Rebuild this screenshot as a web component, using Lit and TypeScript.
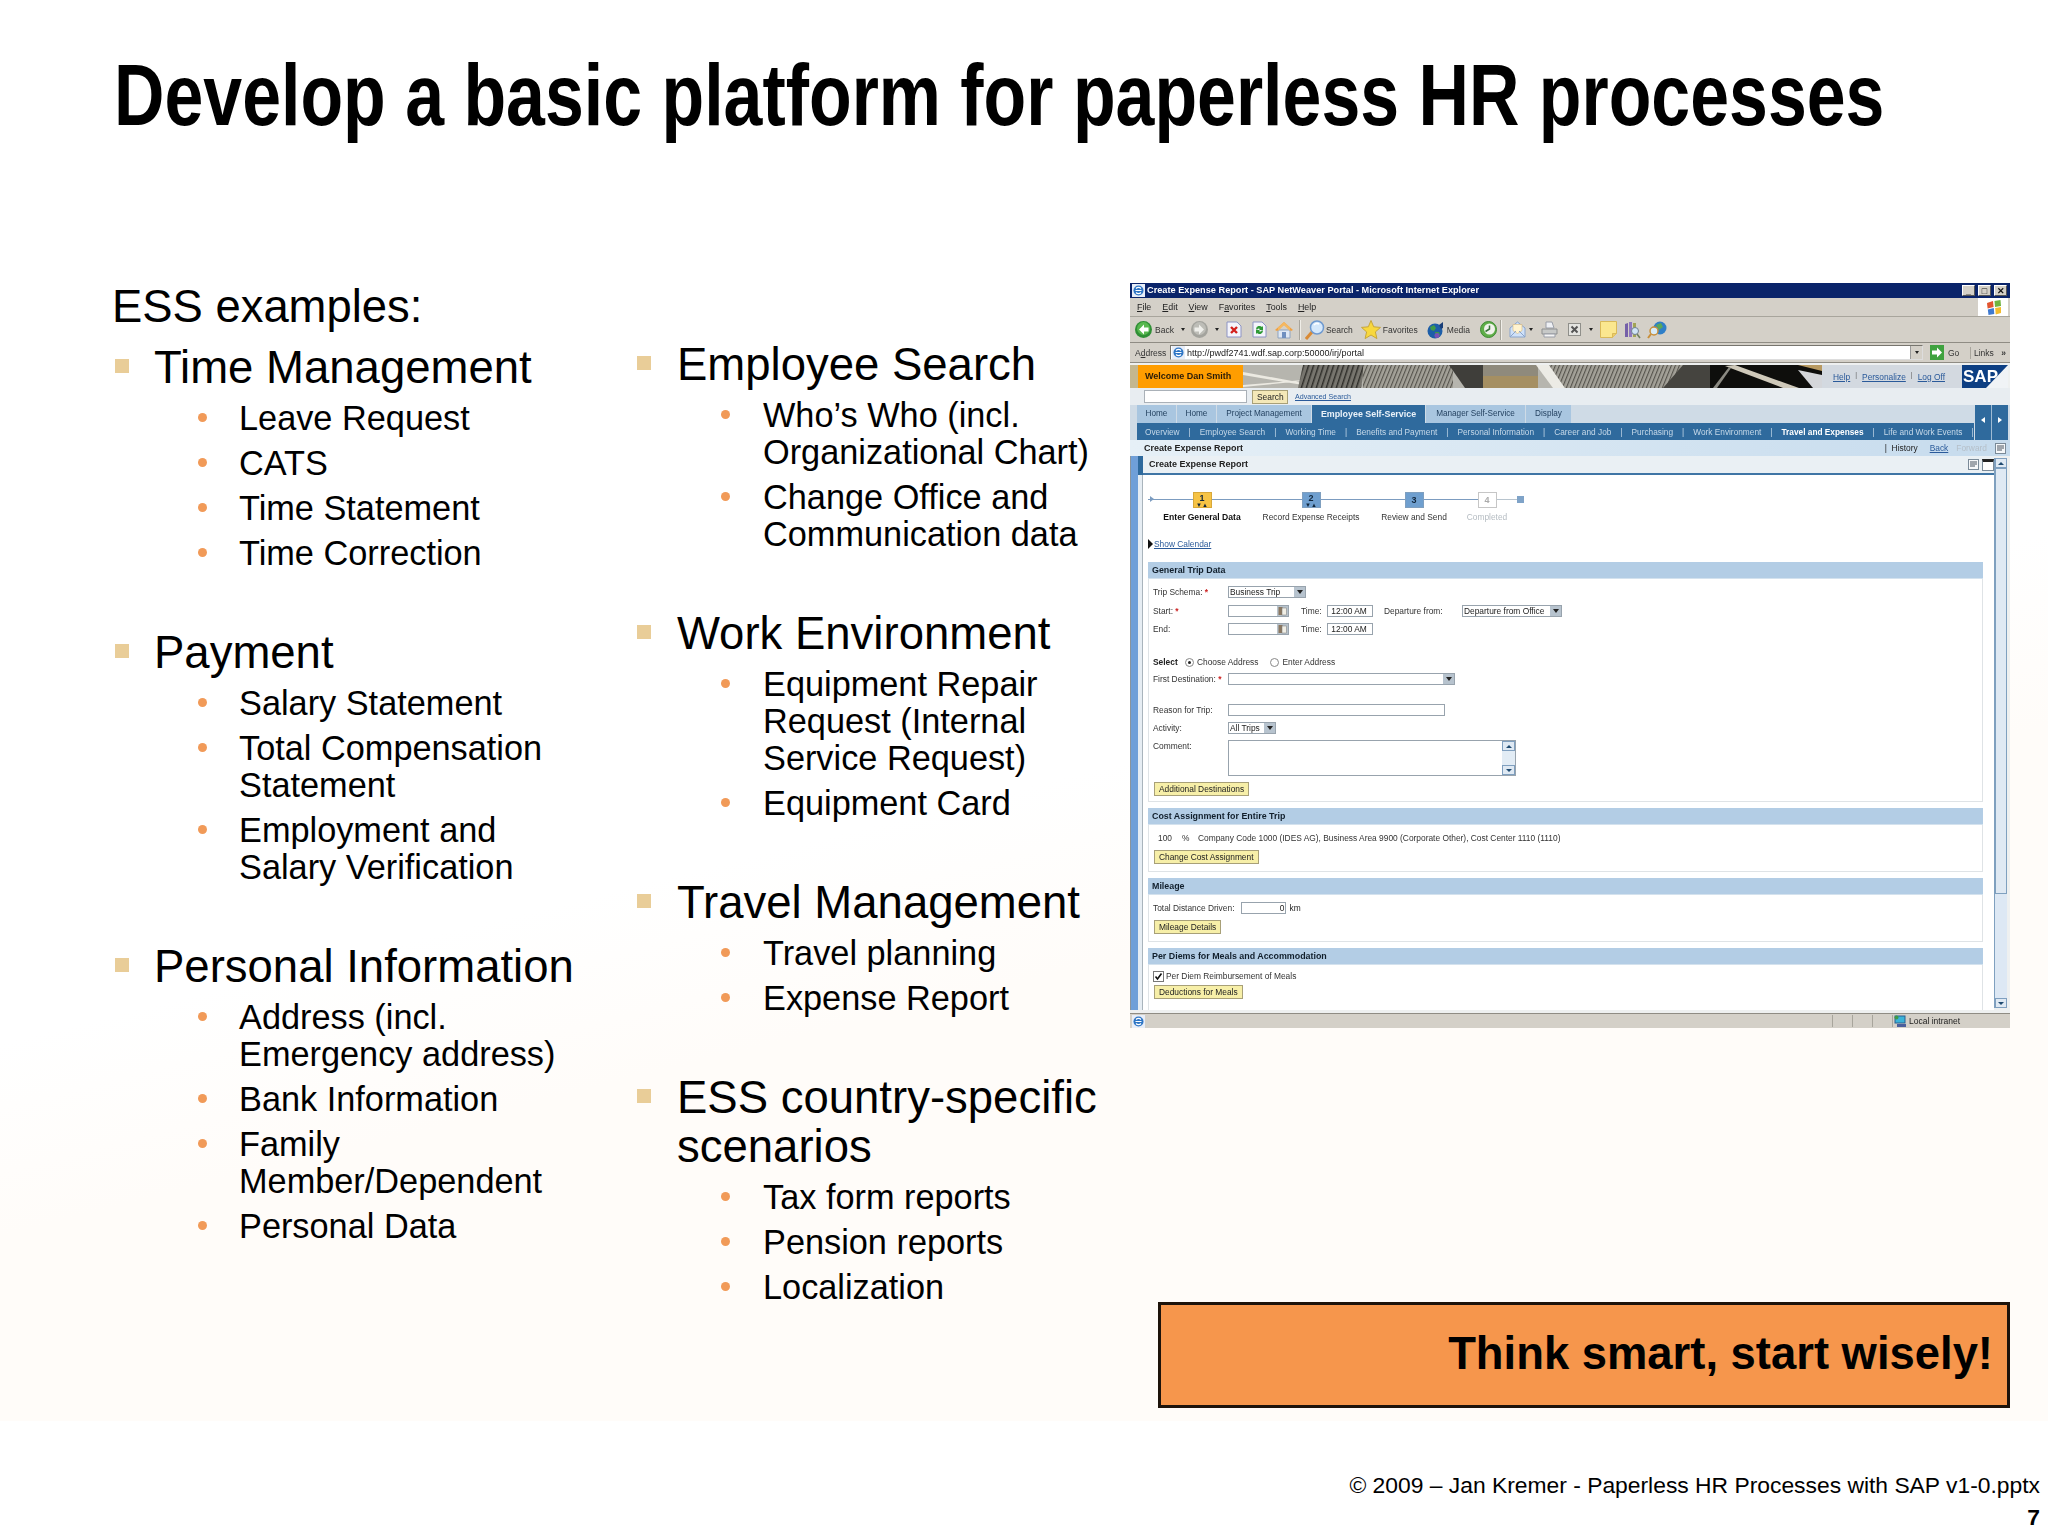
import { LitElement, html, css, svg } from 'lit';
import { customElement } from 'lit/decorators.js';

type Topic = { title: string; items: string[] };

const column1: Topic[] = [
  { title: 'Time Management', items: ['Leave Request', 'CATS', 'Time Statement', 'Time Correction'] },
  { title: 'Payment', items: ['Salary Statement', 'Total Compensation\nStatement', 'Employment and\nSalary Verification'] },
  { title: 'Personal Information', items: ['Address (incl.\nEmergency address)', 'Bank Information', 'Family\nMember/Dependent', 'Personal Data'] },
];

const column2: Topic[] = [
  { title: 'Employee Search', items: ['Who\u2019s Who (incl.\nOrganizational Chart)', 'Change Office and\nCommunication data'] },
  { title: 'Work Environment', items: ['Equipment Repair\nRequest (Internal\nService Request)', 'Equipment Card'] },
  { title: 'Travel Management', items: ['Travel planning', 'Expense Report'] },
  { title: 'ESS country-specific\nscenarios', items: ['Tax form reports', 'Pension reports', 'Localization'] },
];

const icon = (w: number, h: number, body: unknown) =>
  html`<svg width=${w} height=${h} viewBox="0 0 ${w} ${h}">${body}</svg>`;

const icons: Record<string, unknown> = {
  back: icon(17, 17, svg`<circle cx="8.5" cy="8.5" r="8.5" fill="#2f8f35"/><circle cx="8.5" cy="7.5" r="6.5" fill="#58b84f"/><path d="M9 3.5 4 8.5l5 5v-3h4.500v-4H9z" fill="#fff"/>`),
  forward: icon(17, 17, svg`<circle cx="8.500" cy="8.500" r="8.500" fill="#a3a39d"/><circle cx="8.500" cy="7.500" r="6.500" fill="#bdbdb7"/><path d="M8 3.500l5 5-5 5v-3H3.500v-4H8z" fill="#efefeb"/>`),
  stop: icon(16, 17, svg`<path d="M1 1h10l4 4v11H1z" fill="#f4f4fb" stroke="#8d94c4"/><path d="M5 6l6 6M11 6l-6 6" stroke="#d3201c" stroke-width="2.400"/>`),
  refresh: icon(15, 17, svg`<path d="M1 1h9l4 4v11H1z" fill="#f4f4fb" stroke="#8d94c4"/><path d="M4 8a3.500 3.500 0 0 1 6-2l1-1v4H7l1-1a2 2 0 0 0-3 1zM11 10a3.500 3.500 0 0 1-6 2l-1 1V9h4l-1 1a2 2 0 0 0 3-1z" fill="#2f9a35"/>`),
  home: icon(18, 18, svg`<path d="M3 9h12v8H3z" fill="#dfe8f4" stroke="#8ea3c0"/><path d="M7 11h4v6H7z" fill="#6f8fbf"/><path d="M0 9 9 1l9 8-2 1-7-6-7 6z" fill="#f0a040"/><path d="M9 1 3 6.500V10l6-6 6 6V6.500z" fill="#f5b860"/>`),
  search: icon(20, 20, svg`<path d="M7 12l-6 7" stroke="#d98a35" stroke-width="3"/><circle cx="12" cy="7.500" r="6.500" fill="#d5e8fb" stroke="#6f9ad0" stroke-width="1.500"/><path d="M9 5a4 4 0 0 1 5-1" stroke="#fff" stroke-width="1.500" fill="none"/>`),
  star: icon(20, 20, svg`<path d="M10 .5l2.700 6.300 6.800.6-5.100 4.500 1.500 6.700L10 15l-5.900 3.600 1.500-6.700L.5 7.400l6.800-.6z" fill="#f8d83f" stroke="#c7a63a"/>`),
  media: icon(18, 18, svg`<circle cx="8" cy="10" r="7.500" fill="#1d5ea8"/><path d="M3 6l4-2 2 3-2 3-3-1zM8 11l4 0 1 3-4 2z" fill="#3f9a48"/><circle cx="10" cy="14.500" r="2.500" fill="#7a52b5"/><path d="M12 4l4-3v6l-2 1z" fill="#1a3f78"/>`),
  history: icon(17, 17, svg`<circle cx="8.500" cy="8.500" r="8" fill="#5fae48" stroke="#3f8a35"/><circle cx="9.500" cy="8" r="5.500" fill="#f0f2ec"/><path d="M9.500 4.500V8l-4 2.500" stroke="#39743a" stroke-width="1.500" fill="none"/>`),
  mail: icon(17, 17, svg`<path d="M1 7 8.500 1 16 7v9H1z" fill="#cfe1f8" stroke="#8aa5cc"/><path d="M4 3.500h9v6l-4.500 3-4.500-3z" fill="#fff3d0" stroke="#d9b97a" stroke-width=".6"/><path d="M1 16l6-6M16 16l-6-6" stroke="#8aa5cc"/>`),
  print: icon(17, 17, svg`<path d="M5 1h6l2 6H5z" fill="#eef0f4" stroke="#9a9ea8"/><path d="M1 8h15v5H1z" fill="#c7c9c8" stroke="#8d8f90"/><path d="M3 13h11v3H3z" fill="#f4f4f4" stroke="#9a9ea8"/>`),
  edit: icon(13, 13, svg`<rect x=".5" y=".5" width="12" height="12" fill="#e4e4e0" stroke="#8f8f8a"/><path d="M3.500 3.500l6 6M9.500 3.500l-6 6" stroke="#555" stroke-width="2"/>`),
  note: icon(17, 17, svg`<path d="M.5.5h16v12l-4 4H.500z" fill="#fbe78f" stroke="#d9b95a"/><path d="M12.500 16.500v-4h4" fill="#eccd6a" stroke="#d9b95a"/>`),
  books: icon(17, 18, svg`<path d="M1 3l3-1v14H1z" fill="#7560a8"/><path d="M5 1h3v15H5z" fill="#8f78bf"/><path d="M9 2h3v14H9z" fill="#a2a455"/><circle cx="11" cy="10" r="3.500" fill="#cfe4f6" stroke="#6f7f90"/><path d="M13 13l3 4" stroke="#6f7f60" stroke-width="1.500"/>`),
  research: icon(23, 18, svg`<circle cx="14" cy="7" r="6.500" fill="#2f7fc8"/><path d="M10 4l5-2 2 4-4 3z" fill="#5aa858"/><circle cx="8" cy="10" r="4" fill="#d8ebf8" stroke="#c98f3a" stroke-width="1.500"/><path d="M5 13l-3 4" stroke="#c98f3a" stroke-width="2"/>`),
  ie: icon(13, 13, svg`<rect width="13" height="13" fill="#e8eef8"/><circle cx="6.500" cy="6.500" r="5" fill="#2d75c5"/><path d="M3.500 6.500h6M4 4.500a3.500 3.500 0 0 1 5 0M4 8.500a3.500 3.500 0 0 0 5 0" stroke="#fff" stroke-width="1.200" fill="none"/>`),
  flag: icon(15, 15, svg`<path d="M1 3l6-2 .6 6-6 1.500z" fill="#e2552f"/><path d="M8.500 1l6-1 .500 6-6 1z" fill="#6fb43f"/><path d="M1.800 9.500l6-1.500.500 6-5.800 1z" fill="#3f79d0"/><path d="M9.200 8l6-1 -.200 6-5.300 1.500z" fill="#f3bb2d"/>`),
  go: icon(14, 15, svg`<rect width="14" height="15" fill="#3fa23f"/><path d="M7 2.500l5 5-5 5V9.500H2v-4h5z" fill="#fff"/>`),
  cal: icon(11, 10, svg`<rect width="11" height="10" fill="#b8c3cc"/><rect x="1.500" y="1" width="4" height="8" fill="#8a7760"/><rect x="5" y="2" width="4.500" height="7" fill="#f1efe6" stroke="#777" stroke-width=".5"/>`),
  net: icon(13, 12, svg`<rect x="1" y="1" width="10" height="7" fill="#3bb3d8" stroke="#2a5f90"/><rect x="3" y="9" width="9" height="3" fill="#4b5f9c"/><circle cx="2.500" cy="2.500" r="2" fill="#3f9a48"/>`),
  doc: icon(11, 11, svg`<rect x=".5" y=".5" width="10" height="10" fill="#f5f7f9" stroke="#7a8a98"/><path d="M2 3h7M2 5h7M2 7h5" stroke="#4a5560"/>`),
  tick: icon(9, 9, svg`<rect width="9" height="9" fill="#fff"/><path d="M1.500 4.500 3.500 7 7.500 1.500" stroke="#111" stroke-width="1.600" fill="none"/>`),
};

const toolbarItems: { gap: number; icon?: string; text?: string; drop?: boolean; sep?: boolean }[] = [
  { gap: 5, icon: 'back' },
  { gap: 3, text: 'Back' },
  { gap: 7, drop: true },
  { gap: 6, icon: 'forward' },
  { gap: 7, drop: true },
  { gap: 7, icon: 'stop' },
  { gap: 10, icon: 'refresh' },
  { gap: 8, icon: 'home' },
  { gap: 6, sep: true },
  { gap: 4, icon: 'search' },
  { gap: 1, text: 'Search' },
  { gap: 8, icon: 'star' },
  { gap: 2, text: 'Favorites' },
  { gap: 9, icon: 'media' },
  { gap: 2, text: 'Media' },
  { gap: 10, icon: 'history' },
  { gap: 3, sep: true },
  { gap: 7, icon: 'mail' },
  { gap: 3, drop: true },
  { gap: 8, icon: 'print' },
  { gap: 10, icon: 'edit' },
  { gap: 8, drop: true },
  { gap: 7, icon: 'note' },
  { gap: 7, icon: 'books' },
  { gap: 5, icon: 'research' },
];

const tabs = [
  { label: 'Home', width: 39 },
  { label: 'Home', width: 39 },
  { label: 'Project Management', width: 94 },
  { label: 'Employee Self-Service', width: 113, active: true },
  { label: 'Manager Self-Service', width: 99 },
  { label: 'Display', width: 45 },
];

const subnav = ['Overview', 'Employee Search', 'Working Time', 'Benefits and Payment', 'Personal Information', 'Career and Job', 'Purchasing', 'Work Environment', 'Travel and Expenses', 'Life and Work Events'];

const steps = [
  { n: '1', label: 'Enter General Data', width: 108, cls: 'current', marks: true },
  { n: '2', label: 'Record Expense Receipts', width: 110, cls: 'done', marks: true },
  { n: '3', label: 'Review and Send', width: 96, cls: 'done', marks: false },
  { n: '4', label: 'Completed', width: 50, cls: 'todo', marks: false },
];

@customElement('sap-window')
export class SapWindow extends LitElement {
  static styles = css`
    :host {
      display: block;
      width: 880px;
      height: 745px;
      font: 8.4px/12px 'Liberation Sans', Arial, sans-serif;
      color: #222;
      background: #eef0f0;
      filter: blur(0.35px);
      overflow: hidden;
    }
    svg { display: block; flex: none; }
    .titlebar {
      height: 15px;
      background: #0a246a;
      color: #fff;
      font-weight: 700;
      font-size: 9.2px;
      line-height: 15px;
      display: flex;
      align-items: center;
      gap: 2px;
      padding: 0 3px 0 2px;
    }
    .titlebar .grow { flex: 1; }
    .ctl {
      width: 11px;
      height: 9px;
      margin-left: 1px;
      background: #d4d0c8;
      border: 1px solid #fff;
      border-right-color: #555;
      border-bottom-color: #555;
      color: #111;
      font-size: 9px;
      line-height: 10px;
      text-align: center;
      box-sizing: content-box;
    }
    .menubar {
      height: 18px;
      background: #d4d0c8;
      border-bottom: 1px solid #a8a59c;
      display: flex;
      align-items: center;
      gap: 11px;
      padding-left: 7px;
      font-size: 8.9px;
    }
    .menubar u { text-decoration: underline; }
    .throbber {
      margin-left: auto;
      width: 30px;
      height: 18px;
      background: #fff;
      display: flex;
      align-items: center;
      justify-content: center;
      margin-right: 2px;
    }
    .toolbar {
      height: 25px;
      background: #d4d0c8;
      border-bottom: 1px solid #8f8c84;
      display: flex;
      align-items: center;
      font-size: 8.5px;
      color: #333;
    }
    .drop-mark {
      width: 0;
      height: 0;
      border: 2px solid transparent;
      border-top: 3px solid #222;
      border-bottom: 0;
    }
    .sep { width: 1px; height: 20px; background: #a8a59c; border-right: 1px solid #f0eee8; }
    .addressbar {
      height: 20px;
      background: #d4d0c8;
      display: flex;
      align-items: center;
      padding-left: 5px;
      font-size: 8.5px;
      color: #333;
      border-bottom: 1px solid #8f8c84;
      box-sizing: border-box;
    }
    .address-label { width: 30px; flex: none; }
    .url {
      margin-left: 5px;
      width: 753px;
      height: 15px;
      background: #fff;
      border: 1px solid #77756e;
      border-right-color: #ddd;
      border-bottom-color: #ddd;
      box-sizing: border-box;
      display: flex;
      align-items: center;
      gap: 2px;
      padding-left: 1px;
      font-size: 9px;
      color: #222;
      flex: none;
    }
    .url .dropbtn { margin-left: auto; width: 11px; height: 13px; background: #d4d0c8; border-left: 1px solid #999; display: flex; align-items: center; justify-content: center; }
    .go { margin-left: 7px; }
    .go-label { margin-left: 4px; width: 22px; }
    .links { border-left: 1px solid #a8a59c; padding-left: 3px; width: 36px; display: flex; justify-content: space-between; box-sizing: border-box; }
    .portal-head {
      margin-top: 2px;
      height: 23px;
      display: flex;
      padding-left: 8px;
      padding-right: 2px;
      background: linear-gradient(90deg, #c4b78f 8px, transparent 8px);
    }
    .welcome {
      width: 105px;
      background: #ff9d00;
      color: #2a1c08;
      font-weight: 700;
      font-size: 9px;
      line-height: 23px;
      padding-left: 7px;
      box-sizing: border-box;
      flex: none;
    }
    .userlinks {
      width: 140px;
      background: #d3d9e0;
      display: flex;
      align-items: center;
      gap: 5px;
      padding-left: 11px;
      box-sizing: border-box;
      color: #2a5a9a;
      flex: none;
      white-space: nowrap;
    }
    .userlinks u { text-decoration: underline; }
    .userlinks i { font-style: normal; color: #666; font-size: 7px; margin-top: -4px; }
    .searchbar {
      height: 17px;
      background: #e8edf1;
      display: flex;
      align-items: center;
      padding-left: 14px;
    }
    .searchbar .box { width: 101px; height: 11px; background: #fff; border: 1px solid #aab1b8; box-sizing: content-box; }
    .btn {
      display: inline-block;
      height: 10px;
      line-height: 10px;
      padding: 1px 4px;
      background: #f7efa8;
      border: 1px solid #a8a078;
      color: #222;
      white-space: nowrap;
    }
    .searchbar .btn { margin-left: 5px; width: 26px; text-align: center; background: #f4e8b8; }
    .adv { margin-left: 7px; color: #2a5a9a; text-decoration: underline; font-size: 7.1px; }
    .nav { height: 35px; display: flex; background: #cfdbe6; padding-left: 7px; }
    .nav-main { flex: 1; display: flex; flex-direction: column; min-width: 0; }
    .tabs { height: 18px; display: flex; }
    .tab {
      margin-right: 1px;
      background: #a9c6e0;
      color: #1f3d5c;
      text-align: center;
      line-height: 18px;
      font-size: 8.2px;
    }
    .tab.active { background: #2f6a9d; color: #eaf2f9; font-weight: 700; font-size: 8.9px; }
    .subnav {
      height: 17px;
      background: #2f6a9d;
      color: #c6d9e9;
      display: flex;
      align-items: center;
      gap: 9px;
      padding-left: 8px;
      white-space: nowrap;
      font-size: 8.3px;
    }
    .subnav b { color: #fff; }
    .nav-arrows { width: 33px; margin-right: 2px; background: #2f6a9d; display: flex; border-left: 1px solid #cfdbe6; }
    .nav-arrows span { flex: 1; display: flex; align-items: center; justify-content: center; padding-bottom: 5px; }
    .nav-arrows span + span { border-left: 1px solid #9fbbd3; }
    .tri-l { width: 0; height: 0; border: 3px solid transparent; border-right: 4px solid #fff; border-left: 0; }
    .tri-r { width: 0; height: 0; border: 3px solid transparent; border-left: 4px solid #fff; border-right: 0; }
    .pagetitle {
      height: 16px;
      background: linear-gradient(90deg, #e6f0f7, #c6dbed);
      display: flex;
      align-items: center;
      padding: 0 4px 0 14px;
      font-weight: 700;
      font-size: 9px;
      color: #222;
    }
    .history { margin-left: auto; display: flex; align-items: center; gap: 8px; font-weight: 400; font-size: 8.4px; }
    .history span { margin-right: 4px; }
    .history u { color: #2a5a9a; }
    .history em { font-style: normal; color: #b5bfc8; }
    .body { height: 554px; display: flex; }
    .strip { width: 13px; flex: none; background: linear-gradient(90deg, #8a949c 1px, #6f9fd8 1px, #6f9fd8 8px, #e6edf3 8px, #e6edf3 12px, #a9b4bc 12px); }
    .strip div { width: 5px; height: 19px; margin-left: 8px; background: #2f6a9d; }
    .main { flex: 1; min-width: 0; display: flex; flex-direction: column; background: #fff; }
    .iview {
      height: 17px;
      background: #eaf0f4;
      border-bottom: 2px solid #3f75a5;
      font-weight: 700;
      font-size: 9px;
      line-height: 17px;
      padding-left: 6px;
      display: flex;
      align-items: center;
      color: #222;
    }
    .iview-tools { margin-left: auto; display: flex; gap: 3px; }
    .minbtn { width: 10px; height: 8px; background: #fff; border: 1px solid #7a8a98; border-top-width: 3px; border-top-color: #222; }
    .content { flex: 1; padding: 17px 11px 0 5px; overflow: hidden; }
    .wizard { width: 376px; background: linear-gradient(90deg, #7c9cc0 92%, #b8c4ce 92%) 0 7px / 100% 1px no-repeat; height: 16px; display: flex; align-items: flex-start; }
    .step { display: flex; flex-direction: column; align-items: center; flex: none; }
    .num {
      width: 19px;
      height: 16px;
      box-sizing: border-box;
      border: 1px solid #7f9fbf;
      background: #6f9fcf;
      font-weight: 700;
      font-size: 9px;
      line-height: 10px;
      text-align: center;
      color: #10253a;
    }
    .num small { display: block; font-size: 6px; line-height: 4px; letter-spacing: 0; }
    .step.current .num { background: #f6c345; border-color: #d8a83a; }
    .step.todo .num { background: #fff; border-color: #c6c6c6; color: #aaa; line-height: 14px; }
    .step.done .num.plain { line-height: 14px; }
    .step-label { margin-top: 3px; white-space: nowrap; color: #333; line-height: 12px; }
    .step.current .step-label { font-weight: 700; color: #111; font-size: 8.6px; }
    .step.todo .step-label { color: #b5bcc2; }
    .wizard-start { width: 0; height: 0; border: 3px solid transparent; border-left: 4px solid #7c9cc0; border-right: 0; margin-top: 4px; flex: none; margin-left: 2px; margin-right: -6px; }
    .wizard-end { width: 7px; height: 7px; margin: 4px 0 0 5px; background: #7fa3c8; flex: none; }
    .calendar {
      margin-top: 30px;
      height: 12px;
      display: flex;
      align-items: center;
      gap: 1px;
      color: #2a5a9a;
      text-decoration: underline;
    }
    .calendar i { width: 0; height: 0; border: 5px solid transparent; border-left: 5px solid #111; border-right: 0; }
    .section { margin-bottom: 6px; }
    .calendar + .section { margin-top: 12px; }
    .section-head {
      height: 16px;
      background: #b3cde5;
      border-bottom: 1px solid #d4e2ee;
      font-weight: 700;
      font-size: 8.9px;
      line-height: 17px;
      padding-left: 4px;
      color: #111f2c;
    }
    .section-body { border: 1px solid #dfe3e6; border-top: 0; padding: 7px 4px 0; box-sizing: border-box; }
    .general { height: 223px; }
    .general .row:first-child { margin-bottom: 7px; }
    .cost { height: 47px; }
    .mileage { height: 47px; }
    .perdiem { height: 60px; padding-top: 5px; }
    .perdiem .row { margin-bottom: 3px; }
    .row { display: flex; align-items: center; min-height: 12px; white-space: nowrap; margin-bottom: 6px; }
    .row.wide { margin-top: 21px; margin-bottom: 5px; }
    .row.after-dest { margin-top: 19px; }
    .lbl { width: 75px; flex: none; color: #333; }
    .req { color: #c22; font-weight: 700; }
    .field {
      height: 12px;
      box-sizing: border-box;
      background: #fff;
      border: 1px solid #98a3ad;
      line-height: 10px;
      padding-left: 1px;
      display: flex;
      align-items: center;
      flex: none;
      color: #222;
    }
    .field .grow { flex: 1; overflow: hidden; white-space: nowrap; }
    .dropbox { width: 11px; height: 10px; background: #b7c3ce; display: flex; align-items: center; justify-content: center; flex: none; }
    .dropbox::after { content: ''; border: 3px solid transparent; border-top: 4px solid #222; border-bottom: 0; }
    .inline-lbl { color: #333; }
    .time-lbl { margin-left: 12px; width: 26px; }
    .dep-lbl { margin-left: 11px; width: 78px; }
    .select-lbl { font-weight: 700; width: 32px; }
    .radio { width: 7px; height: 7px; border: 1px solid #888; border-radius: 50%; margin-right: 3px; flex: none; background: #fff; box-sizing: content-box; display: flex; align-items: center; justify-content: center; }
    .radio.on::after { content: ''; width: 3px; height: 3px; border-radius: 50%; background: #222; }
    .radio-second { margin-left: 12px; }
    .comment-row { align-items: flex-start; }
    .comment { width: 288px; height: 36px; border: 1px solid #98a3ad; box-sizing: border-box; display: flex; justify-content: flex-end; flex: none; }
    .comment-bar { width: 13px; background: #e2ecf5; display: flex; flex-direction: column; justify-content: space-between; }
    .sb-btn { height: 10px; background: #dfe9f3; border: 1px solid #7f9fbf; box-sizing: border-box; display: flex; align-items: center; justify-content: center; flex: none; }
    .sb-up::after { content: ''; border: 3px solid transparent; border-bottom: 3px solid #1f4a70; border-top: 0; }
    .sb-down::after { content: ''; border: 3px solid transparent; border-top: 3px solid #1f4a70; border-bottom: 0; }
    .cost-line { display: flex; padding-left: 5px; color: #333; margin-bottom: 6px; }
    .cost-line span:nth-child(1) { width: 24px; }
    .cost-line span:nth-child(2) { width: 16px; }
    .check { width: 9px; height: 9px; border: 1px solid #777; background: #fff; margin-right: 2px; box-sizing: content-box; flex: none; }
    .section-body .btn { margin-left: 1px; }
    .dist { width: 45px; margin: 0 3px 0 7px; justify-content: flex-end; padding-right: 1px; }
    .scrollbar { width: 12px; flex: none; margin: 2px 3px 2px 0; background: #dde8f4; border-left: 1px solid #7fa0bf; display: flex; flex-direction: column; box-sizing: content-box; }
    .thumb { height: 426px; background: #dfe9f3; border: 1px solid #7fa0bf; box-sizing: border-box; }
    .scrollbar .spacer { flex: 1; }
    .status {
      margin-top: 3px;
      height: 15px;
      background: #d4d0c8;
      border-top: 1px solid #8f8c84;
      display: flex;
      align-items: center;
      box-sizing: border-box;
      padding-left: 2px;
      font-size: 8.5px;
    }
    .status .cell { width: 19px; height: 12px; border-left: 1px solid #a8a59c; }
    .status .cells { margin-left: auto; display: flex; }
    .status .zone { width: 118px; display: flex; align-items: center; gap: 2px; border-left: 1px solid #a8a59c; padding-left: 1px; box-sizing: border-box; color: #222; }
  `;

  private select(width: number, text: string) {
    return html`<div class="field" style="width:${width}px"><span class="grow">${text}</span><span class="dropbox"></span></div>`;
  }

  private dateRow(label: unknown, extra: unknown) {
    return html`<div class="row">
      <span class="lbl">${label}</span>
      <div class="field" style="width:61px"><span class="grow"></span>${icons.cal}</div>
      <span class="inline-lbl time-lbl">Time:</span>
      <div class="field" style="width:46px">&nbsp;12:00 AM</div>
      ${extra}
    </div>`;
  }

  private banner() {
    return html`<svg width="579" height="23" viewBox="0 0 579 23">
      <defs>
        <pattern id="hatch" width="5" height="23" patternUnits="userSpaceOnUse" patternTransform="skewX(-18)">
          <rect width="5" height="23" fill="#77756e"/><rect width="1.500" height="23" fill="#2f2e2a"/>
        </pattern>
        <pattern id="hatch2" width="4" height="23" patternUnits="userSpaceOnUse" patternTransform="skewX(-22)">
          <rect width="4" height="23" fill="#a3a198"/><rect width="1.200" height="23" fill="#55534c"/>
        </pattern>
      </defs>
      <rect width="579" height="23" fill="#b6b5ae"/>
      <path d="M0 7 60 18V20L0 10ZM0 20 60 15V16L0 22Z" fill="#eceae2"/>
      <path d="M55 23 60 0H122L118 23Z" fill="url(#hatch)"/>
      <rect x="120" y="0" width="90" height="23" fill="url(#hatch2)"/>
      <path d="M206 0H240V23H222Z" fill="#3f3e3a"/>
      <rect x="240" width="55" height="11" fill="#8f8a7c"/>
      <rect x="240" y="11" width="55" height="12" fill="#a58f62"/>
      <path d="M293 0H306L322 23H310Z" fill="#ecebe5"/>
      <path d="M306 0H440L424 23H322Z" fill="url(#hatch2)"/>
      <path d="M440 0H467V23H420Z" fill="#45443f"/>
      <rect x="467" width="112" height="23" fill="#0e0e0c"/>
      <path d="M486 0H579V6L555 0Z" fill="#b89a62"/>
      <path d="M482 1 540 23H556L492 0Z" fill="#cfc9ba"/>
      <path d="M470 23 486 2 488 3 474 23Z" fill="#8b8a82"/>
      <path d="M555 5 579 10V23H570Z" fill="#d4d6da"/>
    </svg>`;
  }

  protected render() {
    return html`
      <div class="titlebar">
        ${icons.ie}
        <span class="grow">Create Expense Report - SAP NetWeaver Portal - Microsoft Internet Explorer</span>
        <span class="ctl">_</span><span class="ctl">□</span><span class="ctl">✕</span>
      </div>
      <div class="menubar">
        <span><u>F</u>ile</span><span><u>E</u>dit</span><span><u>V</u>iew</span><span>F<u>a</u>vorites</span><span><u>T</u>ools</span><span><u>H</u>elp</span>
        <span class="throbber">${icons.flag}</span>
      </div>
      <div class="toolbar">
        ${toolbarItems.map(t => html`<span style="margin-left:${t.gap}px">
          ${t.icon ? icons[t.icon] : ''}${t.text ?? ''}${t.drop ? html`<div class="drop-mark"></div>` : ''}${t.sep ? html`<div class="sep"></div>` : ''}
        </span>`)}
      </div>
      <div class="addressbar">
        <span class="address-label">A<u>d</u>dress</span>
        <div class="url">${icons.ie}<span>http://pwdf2741.wdf.sap.corp:50000/irj/portal</span><span class="dropbtn"><div class="drop-mark"></div></span></div>
        <span class="go">${icons.go}</span><span class="go-label">Go</span>
        <span class="links"><span>Links</span><b>»</b></span>
      </div>
      <div class="portal-head">
        <div class="welcome">Welcome Dan Smith</div>
        ${this.banner()}
        <div class="userlinks"><u>Help</u><i>|</i><u>Personalize</u><i>|</i><u>Log Off</u></div>
        <svg width="46" height="23" viewBox="0 0 46 23">
          <rect width="46" height="23" fill="#f0f3f6"/>
          <path d="M0 0H46L24 23H0Z" fill="#0d3f83"/>
          <text x="1" y="17" font-family="Liberation Sans" font-weight="700" font-size="17" fill="#fff" textLength="35">SAP</text>
        </svg>
      </div>
      <div class="searchbar">
        <div class="box"></div><span class="btn">Search</span><span class="adv">Advanced Search</span>
      </div>
      <div class="nav">
        <div class="nav-main">
          <div class="tabs">
            ${tabs.map(t => html`<div class="tab ${t.active ? 'active' : ''}" style="width:${t.width}px">${t.label}</div>`)}
          </div>
          <div class="subnav">
            ${subnav.map((s, i) => html`${i ? html`<span>|</span>` : ''}${s === 'Travel and Expenses' ? html`<b>${s}</b>` : html`<span>${s}</span>`}`)}
            <span>|</span>
          </div>
        </div>
        <div class="nav-arrows"><span><i class="tri-l"></i></span><span><i class="tri-r"></i></span></div>
      </div>
      <div class="pagetitle">
        Create Expense Report
        <div class="history"><span>| &nbsp;History</span><u>Back</u><em>Forward</em>${icons.doc}</div>
      </div>
      <div class="body">
        <div class="strip"><div></div></div>
        <div class="main">
          <div class="iview">Create Expense Report
            <div class="iview-tools">${icons.doc}<span class="minbtn"></span></div>
          </div>
          <div class="content">
            <div class="wizard">
              <i class="wizard-start"></i>
              ${steps.map(s => html`<div class="step ${s.cls}" style="width:${s.width}px">
                <div class="num ${s.marks ? '' : 'plain'}">${s.n}${s.marks ? html`<small>▼▲</small>` : ''}</div>
                <div class="step-label">${s.label}</div>
              </div>`)}
              <i class="wizard-end"></i>
            </div>
            <div class="calendar"><i></i>Show Calendar</div>
            <div class="section">
              <div class="section-head">General Trip Data</div>
              <div class="section-body general">
                <div class="row"><span class="lbl">Trip Schema: <span class="req">*</span></span>${this.select(78, 'Business Trip')}</div>
                ${this.dateRow(html`Start: <span class="req">*</span>`, html`<span class="inline-lbl dep-lbl">Departure from:</span>${this.select(100, 'Departure from Office')}`)}
                ${this.dateRow('End:', '')}
                <div class="row wide">
                  <span class="select-lbl">Select</span>
                  <span class="radio on"></span><span class="inline-lbl">Choose Address</span>
                  <span class="radio radio-second"></span><span class="inline-lbl">Enter Address</span>
                </div>
                <div class="row"><span class="lbl">First Destination: <span class="req">*</span></span>${this.select(227, '')}</div>
                <div class="row after-dest"><span class="lbl">Reason for Trip:</span><div class="field" style="width:217px"></div></div>
                <div class="row"><span class="lbl">Activity:</span>${this.select(48, 'All Trips')}</div>
                <div class="row comment-row">
                  <span class="lbl">Comment:</span>
                  <div class="comment"><div class="comment-bar"><span class="sb-btn sb-up"></span><span class="sb-btn sb-down"></span></div></div>
                </div>
                <span class="btn">Additional Destinations</span>
              </div>
            </div>
            <div class="section">
              <div class="section-head">Cost Assignment for Entire Trip</div>
              <div class="section-body cost">
                <div class="cost-line"><span>100</span><span>%</span><span>Company Code 1000 (IDES AG), Business Area 9900 (Corporate Other), Cost Center 1110 (1110)</span></div>
                <span class="btn">Change Cost Assignment</span>
              </div>
            </div>
            <div class="section">
              <div class="section-head">Mileage</div>
              <div class="section-body mileage">
                <div class="row"><span class="inline-lbl">Total Distance Driven:</span>
                  <div class="field dist">0</div><span>km</span></div>
                <span class="btn">Mileage Details</span>
              </div>
            </div>
            <div class="section">
              <div class="section-head">Per Diems for Meals and Accommodation</div>
              <div class="section-body perdiem">
                <div class="row"><span class="check">${icons.tick}</span><span class="inline-lbl">Per Diem Reimbursement of Meals</span></div>
                <span class="btn">Deductions for Meals</span>
              </div>
            </div>
          </div>
        </div>
        <div class="scrollbar">
          <span class="sb-btn sb-up"></span>
          <div class="thumb"></div>
          <div class="spacer"></div>
          <span class="sb-btn sb-down"></span>
        </div>
      </div>
      <div class="status">
        ${icons.ie}
        <div class="cells"><span class="cell"></span><span class="cell"></span><span class="cell"></span>
          <div class="zone">${icons.net}Local intranet</div></div>
      </div>
    `;
  }
}

@customElement('app-root')
export class AppRoot extends LitElement {
  static styles = css`
    :host {
      display: block;
      width: 2048px;
      height: 1536px;
      overflow: hidden;
      font-family: 'Liberation Sans', Arial, sans-serif;
      color: #000;
      background: linear-gradient(166deg, #fff 54%, #fffcf9 64%) 0 0 / 2048px 1421px no-repeat, #fff;
    }
    .title {
      margin: 0;
      height: 282px;
      box-sizing: border-box;
      padding: 45px 0 0 114px;
      font-size: 87px;
      line-height: 100px;
      font-weight: 700;
      white-space: nowrap;
      transform: scaleX(0.803);
      transform-origin: 114px 0;
    }
    .main { height: 1126px; display: flex; }
    .col { flex: none; box-sizing: border-box; }
    .col-1 { width: 637px; padding: 1px 0 0 112px; }
    .col-2 { width: 493px; padding-top: 58px; }
    .col-right { width: 880px; display: flex; flex-direction: column; padding-top: 1px; }
    .lead { font-size: 45.4px; line-height: 48px; padding-bottom: 12px; }
    .col-1 .topics { margin-left: 3px; }
    .topic + .topic { margin-top: 56px; }
    .topic-title { display: flex; font-size: 45.5px; line-height: 49px; white-space: pre; }
    .square { width: 14px; height: 14px; margin: 16px 25px 0 0; background: #e9cd98; flex: none; }
    .col-2 .square { margin-right: 26px; }
    .items { margin: 8px 0 0; padding: 0; list-style: none; }
    .item { display: flex; font-size: 34.3px; line-height: 37px; white-space: pre; margin-left: 83px; }
    .col-2 .item { margin-left: 84px; }
    .item + .item { margin-top: 8px; }
    .dot { width: 9px; height: 9px; margin: 13px 32px 0 0; border-radius: 50%; background: #f19a58; flex: none; }
    .col-2 .dot { margin-right: 33px; }
    .callout {
      margin: 274px 0 0 28px;
      height: 106px;
      box-sizing: border-box;
      border: 3px solid #1d130b;
      background: #f6964c;
      display: flex;
      align-items: center;
      justify-content: flex-end;
      padding: 0 14px 2px 0;
      font-size: 45.4px;
      font-weight: 700;
    }
    .footer {
      padding: 61px 8px 0 0;
      text-align: right;
      font-size: 22.85px;
      line-height: 32px;
    }
    .page { font-weight: 700; }
  `;

  private column(topics: Topic[]) {
    return html`<div class="topics">
      ${topics.map(t => html`<section class="topic">
        <div class="topic-title"><span class="square"></span><span>${t.title}</span></div>
        <ul class="items">
          ${t.items.map(i => html`<li class="item"><span class="dot"></span><span>${i}</span></li>`)}
        </ul>
      </section>`)}
    </div>`;
  }

  protected render() {
    return html`
      <h1 class="title">Develop a basic platform for paperless HR processes</h1>
      <div class="main">
        <div class="col col-1">
          <div class="lead">ESS examples:</div>
          ${this.column(column1)}
        </div>
        <div class="col col-2">${this.column(column2)}</div>
        <div class="col col-right">
          <sap-window></sap-window>
          <div class="callout">Think smart, start wisely!</div>
        </div>
      </div>
      <footer class="footer">
        <div>© 2009 – Jan Kremer - Paperless HR Processes with SAP v1-0.pptx</div>
        <div class="page">7</div>
      </footer>
    `;
  }
}
